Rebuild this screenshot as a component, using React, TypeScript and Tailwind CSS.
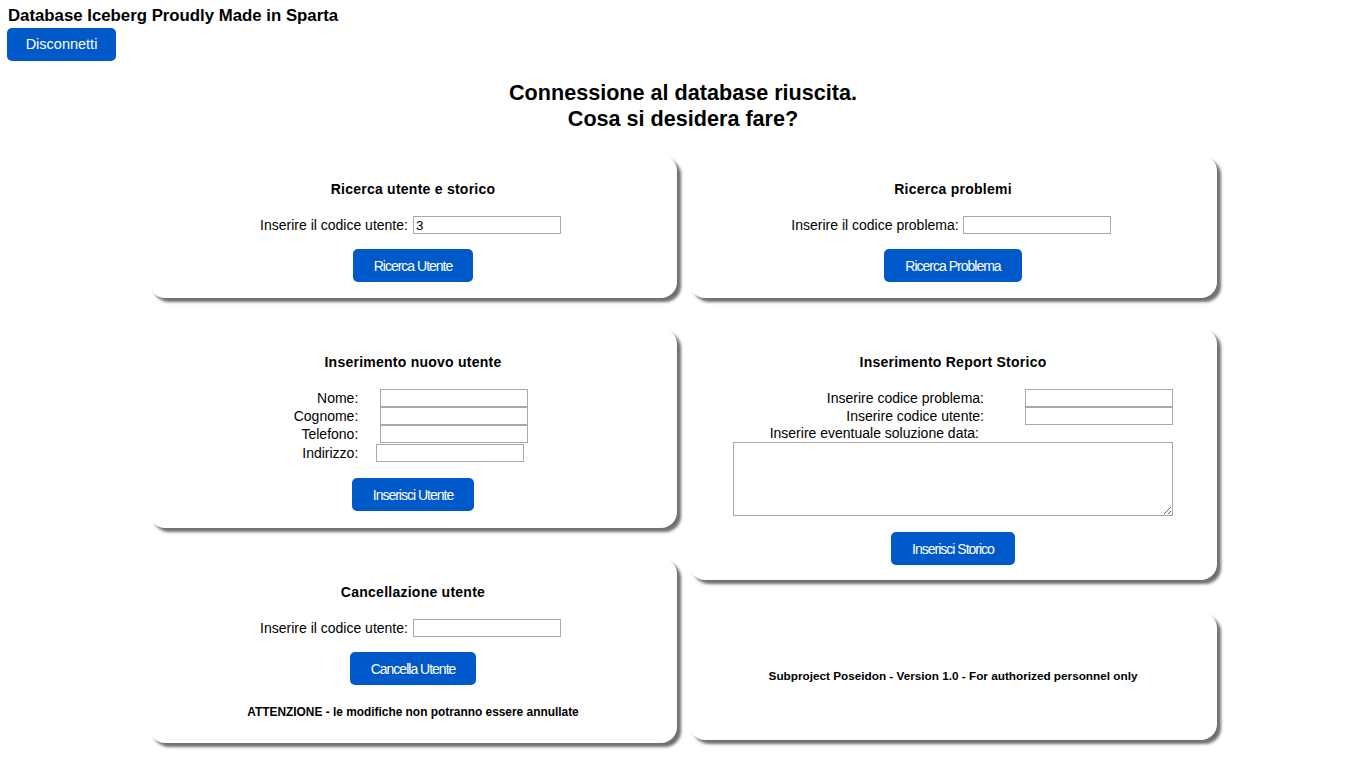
import React from "react";

const card = "rounded-[16px] bg-white shadow-[4px_4px_3px_#707070] flex flex-col items-center";
const title = "text-[14px] font-bold leading-[16px] tracking-[0.25px] text-center text-black";
const btn =
  "h-[33px] rounded-[5px] bg-[#0059c8] px-[21px] text-[14px] tracking-[-1px] text-white leading-none";
const inp =
  "h-[18px] w-[148px] border border-[#a9a9a9] bg-white px-[2px] text-[13.33px] leading-none text-black outline-none";

export default function App() {
  return (
    <div
      className="min-h-screen bg-white text-black"
      style={{ fontFamily: '"Liberation Sans", Arial, sans-serif' }}
    >
      <div className="px-[7px] pt-[6px]">
        <div className="pl-[1px] text-[16.8px] font-bold leading-[20px]">
          Database Iceberg Proudly Made in Sparta
        </div>
        <button className="mt-[2px] h-[33px] w-[109px] rounded-[5px] bg-[#0059c8] text-[14.5px] leading-none text-white">
          Disconnetti
        </button>
      </div>

      <h1 className="mt-[19px] text-center text-[21.6px] font-bold leading-[26px]">
        Connessione al database riuscita.
        <br />
        Cosa si desidera fare?
      </h1>

      <div className="mx-auto mt-[23px] grid w-[1068px] grid-cols-2 items-start gap-x-[12px]">
        {/* Left column */}
        <div className="flex flex-col">
          <div className={card + " pt-[26px] pb-[16px]"}>
            <div className={title}>Ricerca utente e storico</div>
            <div className="mt-[19px] flex items-center gap-[5px] pr-[5px] text-[14px] leading-[18px]">
              <span>Inserire il codice utente:</span>
              <input className={inp} defaultValue="3" />
            </div>
            <button className={btn + " mt-[15px]"}>Ricerca Utente</button>
          </div>

          <div className={card + " mt-[30px] pt-[26px] pb-[17px]"}>
            <div className={title}>Inserimento nuovo utente</div>
            <div className="mt-[19px] flex pr-[4px] text-[14px] leading-[18px]">
              <div className="flex flex-col text-right">
                <span className="h-[18px]">Nome:</span>
                <span className="h-[18px]">Cognome:</span>
                <span className="h-[18px]">Telefono:</span>
                <span className="mt-[1px] h-[18px]">Indirizzo:</span>
              </div>
              <div className="ml-[22px] flex flex-col">
                <input className={inp} />
                <input className={inp} />
                <input className={inp} />
                <input className={inp + " mt-[1px] -ml-[4px]"} />
              </div>
            </div>
            <button className={btn + " mt-[16px]"}>Inserisci Utente</button>
          </div>

          <div className={card + " mt-[30px] pt-[26px] pb-[24px]"}>
            <div className={title}>Cancellazione utente</div>
            <div className="mt-[19px] flex items-center gap-[5px] pr-[5px] text-[14px] leading-[18px]">
              <span>Inserire il codice utente:</span>
              <input className={inp} />
            </div>
            <button className={btn + " mt-[15px]"}>Cancella Utente</button>
            <div className="mt-[20px] text-[11.9px] font-bold leading-[14px]">
              ATTENZIONE - le modifiche non potranno essere annullate
            </div>
          </div>
        </div>

        {/* Right column */}
        <div className="flex flex-col">
          <div className={card + " pt-[26px] pb-[16px]"}>
            <div className={title}>Ricerca problemi</div>
            <div className="mt-[19px] flex items-center gap-[4px] pr-[4px] text-[14px] leading-[18px]">
              <span>Inserire il codice problema:</span>
              <input className={inp} />
            </div>
            <button className={btn + " mt-[15px]"}>Ricerca Problema</button>
          </div>

          <div className={card + " mt-[30px] pt-[26px] pb-[15px]"}>
            <div className={title}>Inserimento Report Storico</div>
            <div className="mt-[19px] flex w-[440px] flex-col text-[14px] leading-[18px]">
              <div className="flex h-[18px] items-center">
                <span className="w-[251px] text-right">Inserire codice problema:</span>
                <input className={inp + " ml-[41px]"} />
              </div>
              <div className="flex h-[18px] items-center">
                <span className="w-[251px] text-right">Inserire codice utente:</span>
                <input className={inp + " ml-[41px]"} />
              </div>
              <div className="h-[17px] w-[246px] text-right leading-[17px]">
                Inserire eventuale soluzione data:
              </div>
              <textarea className="h-[74px] w-[440px] border border-[#a9a9a9] bg-white p-[2px] text-[13.33px] outline-none" />
            </div>
            <button className={btn + " mt-[16px]"}>Inserisci Storico</button>
          </div>

          <div className={card + " mt-[32px] h-[128px] justify-center"}>
            <div className="text-[11.75px] font-bold leading-[14px]">
              Subproject Poseidon - Version 1.0 - For authorized personnel only
            </div>
          </div>
        </div>
      </div>
    </div>
  );
}
